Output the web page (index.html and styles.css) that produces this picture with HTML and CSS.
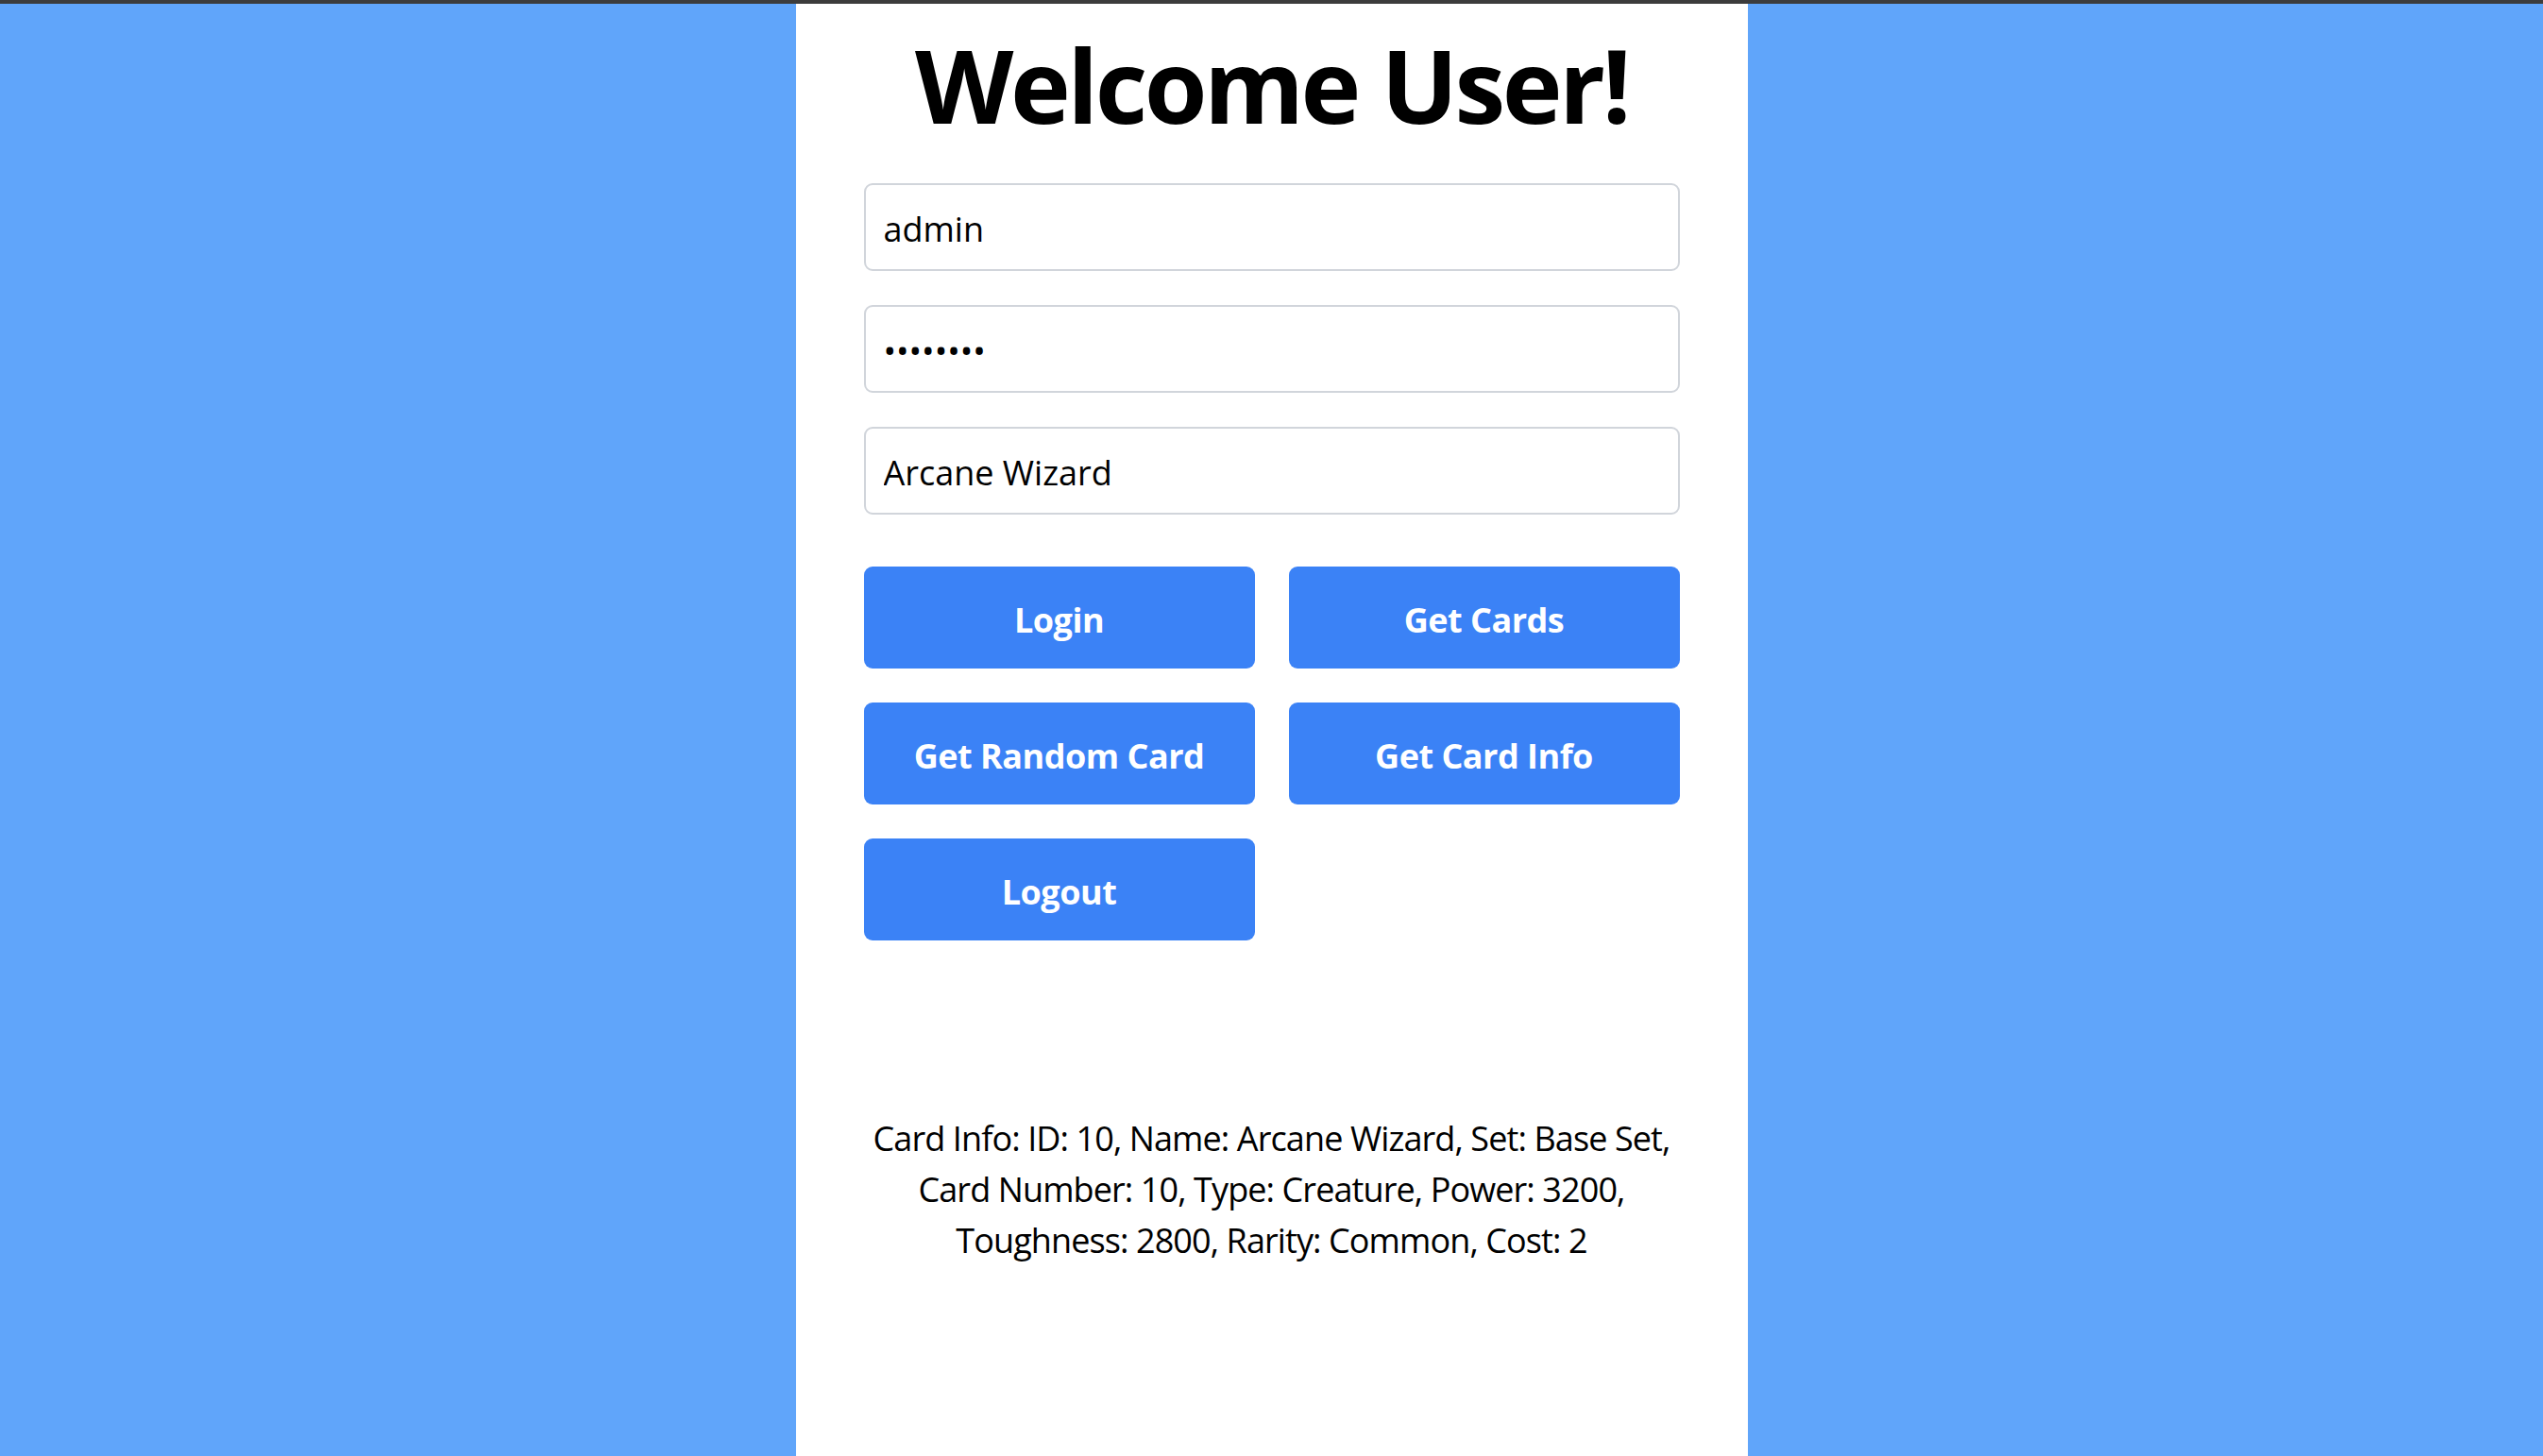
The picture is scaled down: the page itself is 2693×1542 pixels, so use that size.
FILE: index.html
```html
<!DOCTYPE html>
<html lang="en">
<head>
<meta charset="utf-8">
<title>Welcome User!</title>
<link rel="stylesheet" href="styles.css">
</head>
<body>
<main class="panel">
  <h1 class="title">Welcome User!</h1>
  <form class="form" onsubmit="return false">
    <input class="field" type="text" value="admin">
    <input class="field" type="password" value="password">
    <input class="field" type="text" value="Arcane Wizard">
    <div class="actions">
      <button class="btn" type="button">Login</button>
      <button class="btn" type="button">Get Cards</button>
      <button class="btn" type="button">Get Random Card</button>
      <button class="btn" type="button">Get Card Info</button>
      <button class="btn" type="button">Logout</button>
    </div>
  </form>
  <p class="info">Card Info: ID: 10, Name: Arcane Wizard, Set: Base Set, Card Number: 10, Type: Creature, Power: 3200, Toughness: 2800, Rarity: Common, Cost: 2</p>
</main>
</body>
</html>
```
FILE: styles.css
```css
* { box-sizing: border-box; }
html, body { height: 100%; }
body {
  margin: 0;
  background: #60a5fa;
  border-top: 4px solid #3c3c3c;
  font-family: "Open Sans", "Noto Sans", sans-serif;
  color: #000;
  overflow: hidden;
}
.panel {
  width: 1008px;
  margin: 0 auto;
  min-height: 1538px;
  background: #fff;
  padding: 32px 72px 0;
}
.title {
  margin: 0 0 50px;
  font-size: 108px;
  line-height: 108px;
  font-weight: 700;
  text-align: center;
  letter-spacing: -3.5px;
}
.form {
  display: flex;
  flex-direction: column;
  gap: 36px;
}
.field {
  display: block;
  width: 100%;
  height: 93px;
  padding: 3px 18px 0 19px;
  border: 2px solid #d1d5db;
  border-radius: 9px;
  font-family: inherit;
  font-size: 36px;
  color: #000;
  background: #fff;
  outline: none;
}
.actions {
  display: grid;
  grid-template-columns: 1fr 1fr;
  gap: 36px;
  margin-top: 19px;
}
.btn {
  height: 108px;
  padding: 4px 0 0;
  border: 0;
  border-radius: 9px;
  background: #3b82f6;
  color: #fff;
  font-family: inherit;
  font-size: 36px;
  font-weight: 700;
  letter-spacing: -0.5px;
}
.info {
  margin: 183px 0 0;
  font-size: 36px;
  line-height: 54px;
  text-align: center;
  letter-spacing: -0.9px;
}
```
